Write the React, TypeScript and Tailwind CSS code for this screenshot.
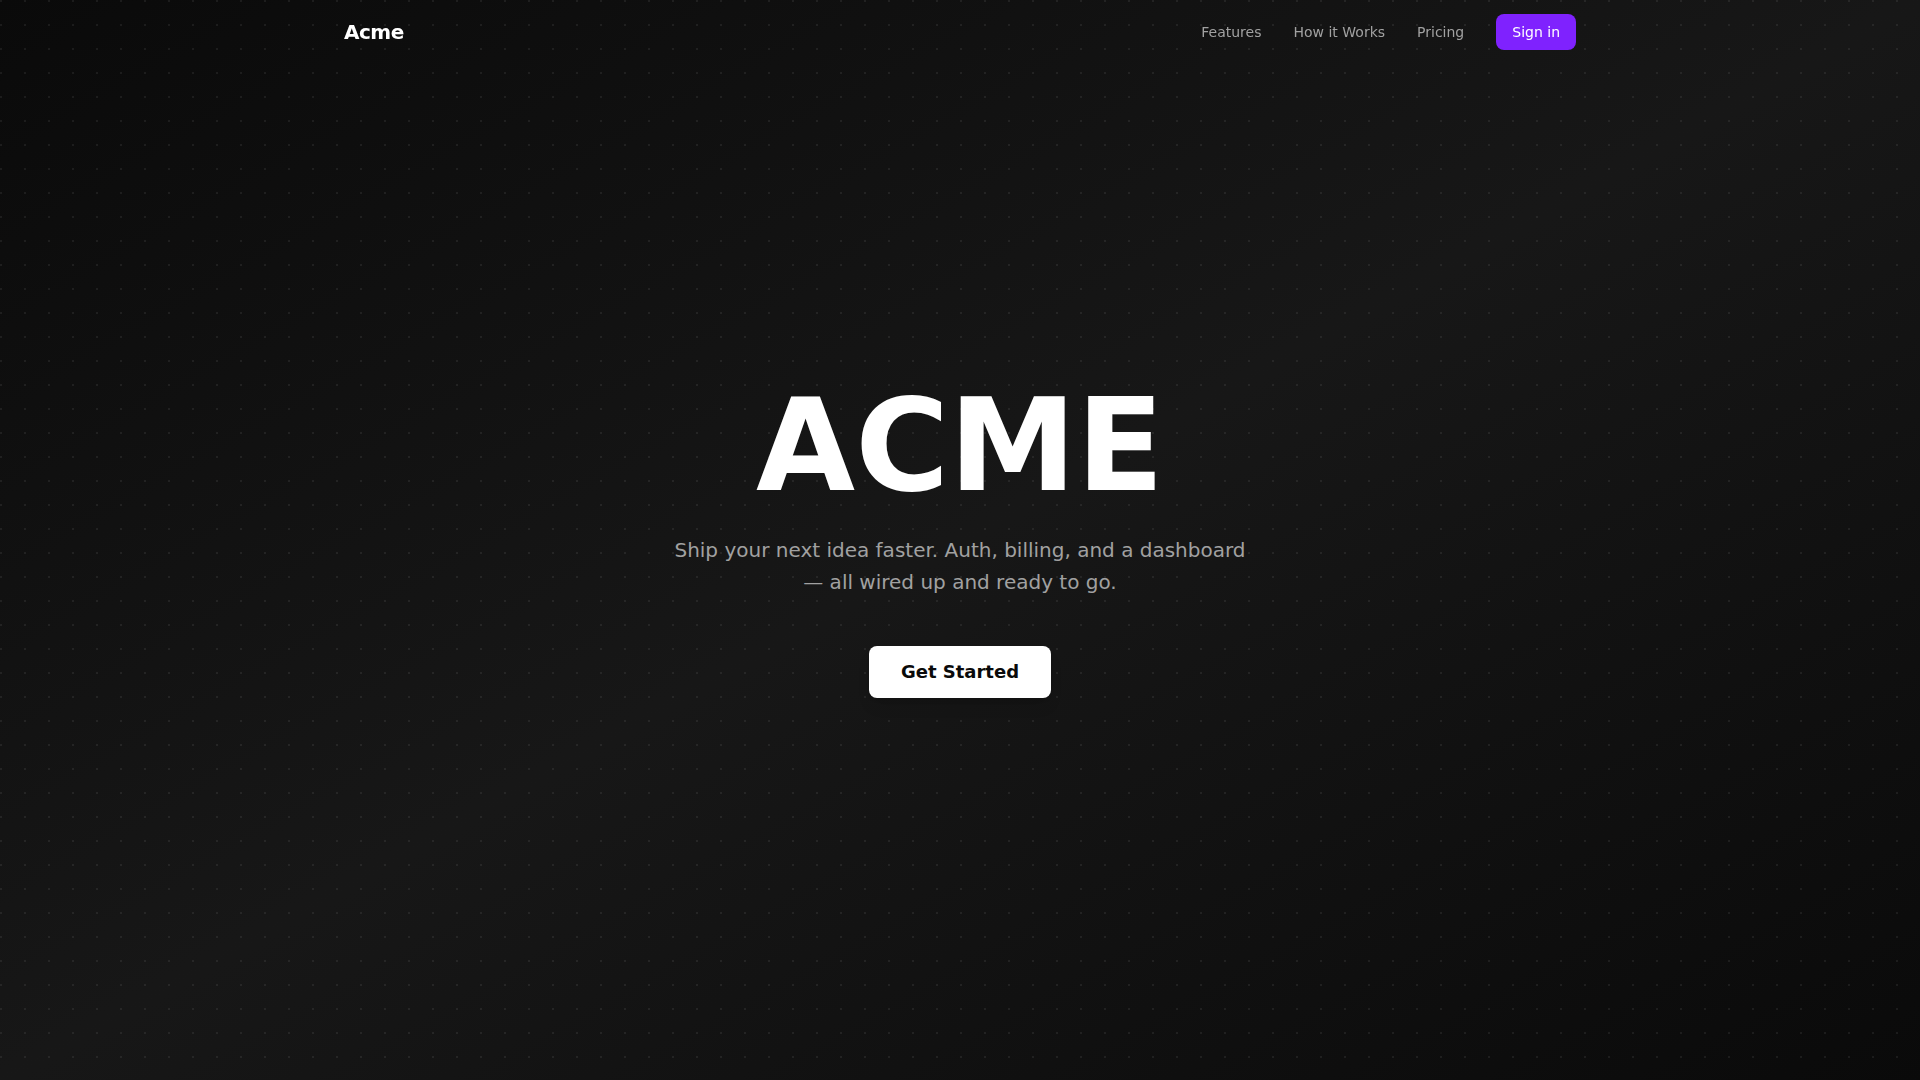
import React from 'react';

const navLinks = ['Features', 'How it Works', 'Pricing'];

const Header: React.FC = () => (
  <header className="fixed inset-x-0 top-0 z-10">
    <div className="mx-auto flex h-16 max-w-7xl items-center justify-between px-6">
      <a href="#" className="text-xl font-bold tracking-tight text-white">
        Acme
      </a>
      <nav className="flex items-center gap-8">
        {navLinks.map((link) => (
          <a key={link} href="#" className="text-sm text-neutral-400 hover:text-white">
            {link}
          </a>
        ))}
        <button className="rounded-lg bg-violet-600 px-4 py-2 text-sm text-white hover:bg-violet-500">
          Sign in
        </button>
      </nav>
    </div>
  </header>
);

export default function App() {
  return (
    <div className="relative min-h-screen overflow-hidden bg-gradient-to-br from-neutral-950 via-neutral-900 to-neutral-950 font-['DejaVu_Sans',sans-serif]">
      {/* dot grid */}
      <div className="pointer-events-none absolute inset-0 bg-[radial-gradient(circle_at_1px_1px,rgba(255,255,255,0.07)_1px,transparent_0)] bg-[size:24px_24px]" />

      <Header />

      <main className="relative flex min-h-screen flex-col items-center justify-center px-6 text-center">
        <h1 className="text-9xl font-bold text-white">ACME</h1>
        <p className="mt-6 max-w-xl text-xl leading-8 text-neutral-400">
          Ship your next idea faster. Auth, billing, and a dashboard — all wired up and ready to go.
        </p>
        <button className="mt-12 rounded-lg bg-white px-8 py-3 text-lg font-bold text-neutral-950 shadow-lg hover:bg-neutral-200">
          Get Started
        </button>
      </main>
    </div>
  );
}
